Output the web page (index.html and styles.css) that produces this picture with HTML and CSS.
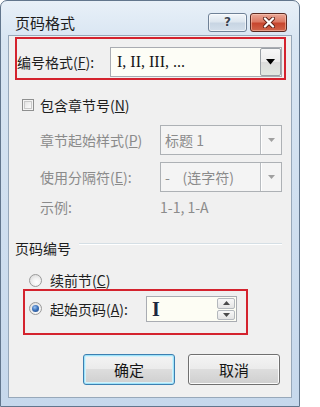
FILE: index.html
```html
<!DOCTYPE html>
<html lang="zh-CN">
<head>
<meta charset="utf-8">
<title>页码格式</title>
<link rel="stylesheet" href="styles.css">
</head>
<body>
<div class="window">
  <div class="titlebar">
    <div class="title">页码格式</div>
    <div class="caption-btns">
      <div class="cap help">?</div>
      <div class="cap close">
        <svg width="14" height="11" viewBox="0 0 14 11">
          <path d="M3 1.5 L11 9.5 M11 1.5 L3 9.5" stroke="#5a1e14" stroke-width="4" stroke-linecap="round"/>
          <path d="M3 1.5 L11 9.5 M11 1.5 L3 9.5" stroke="#ffffff" stroke-width="2.4" stroke-linecap="round"/>
        </svg>
      </div>
    </div>
  </div>
  <div class="client">
    <div class="hl hl-format">
      <span class="label">编号格式(<u>F</u>):</span>
      <div class="combo">
        <span class="combo-text serif">I, II, III, ...</span>
        <span class="dd">
          <svg width="9" height="6" viewBox="0 0 9 6"><path d="M0 0 H9 L4.5 5.5 Z" fill="#000"/></svg>
        </span>
      </div>
    </div>

    <div class="check-row">
      <span class="checkbox"></span>
      <span>包含章节号(<u>N</u>)</span>
    </div>

    <div class="field-row first">
      <span class="flabel">章节起始样式(<u>P</u>)</span>
      <div class="combo combo-dis">
        <span class="combo-text">标题 1</span>
        <span class="dd-dis"><svg width="7" height="4" viewBox="0 0 7 4"><path d="M0 0 H7 L3.5 4 Z" fill="#a0a0a0"/></svg></span>
      </div>
    </div>

    <div class="field-row">
      <span class="flabel">使用分隔符(<u>E</u>):</span>
      <div class="combo combo-dis">
        <span class="combo-text">-&nbsp;&nbsp;&nbsp;&nbsp;(连字符)</span>
        <span class="dd-dis"><svg width="7" height="4" viewBox="0 0 7 4"><path d="M0 0 H7 L3.5 4 Z" fill="#a0a0a0"/></svg></span>
      </div>
    </div>

    <div class="example-row">
      <span class="flabel">示例:</span>
      <span>1-1, 1-A</span>
    </div>

    <div class="group-head">
      <span>页码编号</span>
      <span class="sep"></span>
    </div>

    <div class="radio-row">
      <span class="radio"></span>
      <span>续前节(<u>C</u>)</span>
    </div>

    <div class="hl hl-start">
      <span class="radio checked"><span class="dot"></span></span>
      <span class="rlabel">起始页码(<u>A</u>):</span>
      <div class="spin">
        <span class="spin-text serif">I</span>
        <div class="spin-btns">
          <span class="sb"><svg width="7" height="4" viewBox="0 0 7 4"><path d="M0 4 H7 L3.5 0 Z" fill="#4a4a4a"/></svg></span>
          <span class="sb"><svg width="7" height="4" viewBox="0 0 7 4"><path d="M0 0 H7 L3.5 4 Z" fill="#4a4a4a"/></svg></span>
        </div>
      </div>
    </div>

    <div class="buttons">
      <div class="btn default">确定</div>
      <div class="btn">取消</div>
    </div>
  </div>
</div>
</body>
</html>
```

FILE: styles.css
```css
* { box-sizing: border-box; }

html, body {
  margin: 0;
  padding: 0;
  background: #ffffff;
}

body {
  font-family: "Noto Sans CJK SC", "Noto Sans", sans-serif;
  font-size: 14px;
  color: #1e1e1e;
  line-height: 18px;
}

u { text-decoration: underline; text-underline-offset: 1px; }

.serif { font-family: "Liberation Serif", "DejaVu Serif", serif; }

.window {
  width: 300px;
  height: 407px;
  border: 1px solid #62768d;
  border-radius: 7px 7px 0 0;
  background: linear-gradient(to bottom, #e8f0f8 0px, #d8e5f2 40px, #c6d8ec 100%);
  display: flex;
  flex-direction: column;
}

/* ---------- title bar ---------- */
.titlebar {
  height: 34px;
  flex: none;
  display: flex;
  align-items: flex-start;
  padding: 12px 12px 0 14px;
}

.title {
  flex: 1;
  font-size: 15px;
  line-height: 20px;
  color: #1b1b1b;
}

.caption-btns {
  display: flex;
  gap: 3px;
}

.cap {
  height: 19px;
  border-radius: 3px;
  display: flex;
  align-items: center;
  justify-content: center;
}

.help {
  width: 39px;
  border: 1px solid #6f8197;
  background: linear-gradient(to bottom, #f2f6fa 0%, #dde6ef 45%, #c8d5e3 55%, #d3dfeb 100%);
  box-shadow: inset 0 0 0 1px rgba(255,255,255,0.6);
  font-family: "DejaVu Sans", sans-serif;
  font-weight: bold;
  font-size: 12px;
  line-height: 17px;
  color: #3a4450;
  text-shadow: 0 0 2px #ffffff;
}

.close {
  width: 37px;
  border: 1px solid #5a2a22;
  background: linear-gradient(to bottom, #eaa797 0%, #dc7a64 45%, #c7462e 55%, #d0654a 100%);
  box-shadow: inset 0 0 0 1px rgba(255,210,190,0.5);
}

/* ---------- client area ---------- */
.client {
  flex: 1;
  margin: 0 7px 8px 7px;
  border: 1px solid #97a8ba;
  background: #f0f0f0;
  display: flex;
  flex-direction: column;
}

.hl {
  border: 2px solid #d4232e;
  display: flex;
}

.hl-format {
  margin: 1px 5px 0 6px;
  height: 43px;
  padding: 8px 2px 1px 0;
  align-items: stretch;
}

.label {
  width: 93px;
  flex: none;
  align-self: center;
  white-space: nowrap;
}

.combo {
  flex: 1;
  display: flex;
  align-items: stretch;
  border: 1px solid #a9acb2;
  background: #fdfdf6;
}

.combo-text {
  flex: 1;
  align-self: center;
  padding-left: 6px;
  white-space: nowrap;
}

.combo-text.serif {
  font-size: 16px;
  color: #141414;
}

.dd {
  width: 21px;
  flex: none;
  border: 1px solid #9aa0a6;
  border-radius: 2px;
  background: linear-gradient(to bottom, #f7f7f7 0%, #ececec 50%, #dcdcdc 51%, #e2e8e2 100%);
  display: flex;
  align-items: center;
  justify-content: center;
}

/* checkbox */
.check-row {
  margin-top: 15px;
  height: 20px;
  padding-left: 13px;
  display: flex;
  align-items: center;
  gap: 6px;
}

.checkbox {
  width: 12px;
  height: 12px;
  border: 1px solid #8e8f8f;
  background: linear-gradient(135deg, #dcdcdc 0%, #f4f4f4 60%, #ffffff 100%);
  box-shadow: inset 0 0 0 1px #f4f4f4, inset 0 0 0 2px #c9c9c9;
}

/* disabled field rows */
.field-row {
  margin-top: 7px;
  height: 30px;
  padding: 0 9px 0 31px;
  display: flex;
  align-items: stretch;
  color: #8b8b8b;
}

.field-row.first { margin-top: 10px; }

.flabel {
  width: 120px;
  flex: none;
  align-self: center;
  white-space: nowrap;
}

.combo-dis {
  border: 1px solid #adb1b5;
  background: #f4f4f4;
}

.combo-dis .combo-text { color: #8b8b8b; padding-left: 4px; }

.dd-dis {
  width: 21px;
  flex: none;
  border-left: 1px solid #b8bcc0;
  box-shadow: inset 1px 0 0 #ffffff;
  display: flex;
  align-items: center;
  justify-content: center;
}

.example-row {
  margin-top: 6px;
  height: 18px;
  padding-left: 31px;
  display: flex;
  align-items: center;
  color: #8b8b8b;
}

/* group header */
.group-head {
  margin-top: 23px;
  height: 18px;
  padding: 0 9px 0 6px;
  display: flex;
  align-items: flex-start;
}

.sep {
  flex: 1;
  margin: 4px 0 0 8px;
  height: 2px;
  border-top: 1px solid #d5dfe5;
  border-bottom: 1px solid #ffffff;
}

/* radios */
.radio-row {
  margin-top: 15px;
  height: 16px;
  padding-left: 20px;
  display: flex;
  align-items: center;
  gap: 8px;
}

.radio {
  width: 13px;
  height: 13px;
  flex: none;
  border-radius: 50%;
  border: 1px solid #9a9a9a;
  background: radial-gradient(circle at 60% 65%, #ffffff 0%, #f2f2f2 40%, #d4d4d4 100%);
  display: flex;
  align-items: center;
  justify-content: center;
}

.radio .dot {
  width: 7px;
  height: 7px;
  border-radius: 50%;
  background: radial-gradient(circle at 40% 35%, #9cc4f0 0%, #3e74bd 45%, #17407c 100%);
}

.hl-start {
  margin: 1px 0 0 14px;
  width: 225px;
  height: 46px;
  padding: 5px 0 0 4px;
  align-items: flex-start;
}

.hl-start .radio { margin-top: 6px; }

.rlabel {
  width: 96px;
  flex: none;
  margin-left: 8px;
  margin-top: 4px;
  white-space: nowrap;
}

.spin {
  width: 91px;
  height: 26px;
  border: 1px solid #a9acb2;
  background: #fdfdf4;
  display: flex;
}

.spin-text {
  flex: 1;
  padding-left: 5px;
  font-size: 20px;
  font-weight: bold;
  line-height: 24px;
  color: #1c2740;
}

.spin-btns {
  width: 20px;
  display: flex;
  flex-direction: column;
  padding: 1px;
  gap: 1px;
}

.sb {
  flex: 1;
  border: 1px solid #b4b8bd;
  border-radius: 2px;
  background: linear-gradient(to bottom, #f8f8f8, #e4e4e4);
  display: flex;
  align-items: center;
  justify-content: center;
}

/* dialog buttons */
.buttons {
  margin-top: 19px;
  padding-right: 11px;
  display: flex;
  justify-content: flex-end;
  gap: 13px;
}

.btn {
  width: 92px;
  height: 31px;
  border: 1px solid #707070;
  border-radius: 3px;
  background: linear-gradient(to bottom, #f4f4f4 0%, #ebebeb 49%, #dddddd 50%, #cfcfcf 100%);
  box-shadow: inset 0 0 0 1px #fbfbfb;
  display: flex;
  align-items: center;
  justify-content: center;
  font-size: 15px;
  color: #151515;
}

.btn.default {
  border-color: #3c7fb1;
  box-shadow: inset 0 0 0 1px #9fe3f9, inset 0 0 0 2px #d4f1fb;
}
```
